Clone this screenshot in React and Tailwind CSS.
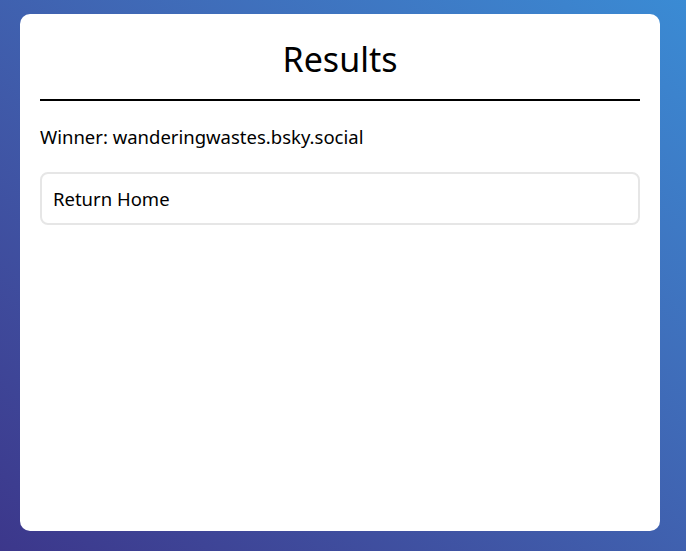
export default function App() {
  return (
    <div className="h-[551px] w-full bg-linear-to-tr from-[#3c378b] to-[#3a8bd4] pl-5 pt-[14px] pb-5 font-['Noto_Sans',sans-serif]">
      <div className="h-full w-[640px] rounded-[10px] bg-white px-5">
        <h1 className="border-b-2 border-black pt-[19px] pb-[14px] text-center text-[34px] leading-[52px] text-black">
          Results
        </h1>
        <p className="mt-[24px] text-[18.5px] leading-[24px] text-black">
          Winner: wanderingwastes.bsky.social
        </p>
        <button className="mt-[23px] flex h-[53px] w-full items-center rounded-[8px] border-2 border-[#e6e6e6] px-[11px] text-left text-[18.5px] text-black">
          Return Home
        </button>
      </div>
    </div>
  );
}
